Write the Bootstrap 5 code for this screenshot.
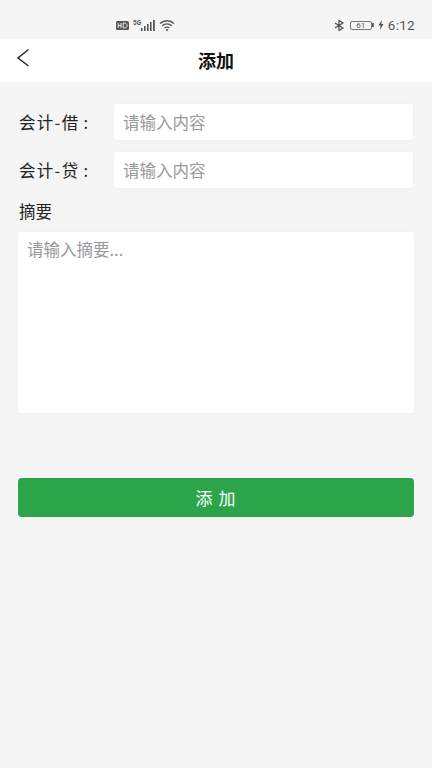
<!DOCTYPE html>
<html lang="zh">
<head>
<meta charset="utf-8">
<link href="https://cdn.jsdelivr.net/npm/bootstrap@5.3.0/dist/css/bootstrap.min.css" rel="stylesheet">
<style>
html,body{height:100%}
body{background:#f5f5f5;font-family:"Noto Sans CJK SC","Liberation Sans",sans-serif;color:#222;overflow:hidden}
.status-row{height:39px;padding:11px 17px 0 116px;color:#555}
.status-clock{font-family:Roboto,sans-serif;font-size:13.5px;letter-spacing:.3px}
.bt-mark{margin-right:6px}
.batt-box{width:22px;height:9px;border:1px solid #777;border-radius:2px;font:8px/8px Roboto,sans-serif;text-align:center;color:#555}
.batt-nub{width:2px;height:4px;background:#666}
.title-bar{height:43px;background:#fff}
.title-text{font-size:18px;font-weight:700;color:#111;line-height:43px}
.back-link{left:16px;top:9px;line-height:0}
.form-area{padding:22px 18px 0}
.field-line{height:36px;margin-bottom:12px}
.field-name{width:96px;flex:none;font-size:16.5px;letter-spacing:1.3px;color:#222;padding-left:1px;white-space:nowrap}
.colon-mark{margin-left:4px}
.soft-input{height:36px;border:0;border-radius:3px;font-size:16.5px;padding:0 9px;margin-right:1px;box-shadow:0 0 2px rgba(0,0,0,.05);color:#222}
.soft-input::placeholder{color:#999;opacity:1}
.memo-label{font-size:16.5px;line-height:22px;margin-bottom:10px;color:#222;padding-left:1px}
.memo-box{height:181px;border:0;border-radius:3px;font-size:16.5px;line-height:22px;padding:6px 9px;resize:none;box-shadow:0 0 2px rgba(0,0,0,.05)}
.memo-box::placeholder{color:#999;opacity:1}
.save-btn{height:39px;margin-top:65px;background:#2ca44a;border:0;border-radius:4px;color:#fff;font-size:17px;letter-spacing:1px;line-height:37px;padding:0}
</style>
</head>
<body>
<div class="status-row d-flex align-items-center justify-content-between">
  <div class="d-flex align-items-center">
    <svg class="me-1" width="13" height="9" viewBox="0 0 13 9" aria-hidden="true"><rect width="13" height="9" rx="1.500" fill="#555"/><path d="M2.200 2v5M2.200 4.500h2.800M5 2v5M7.200 2v5h1.300c1.600 0 2.500-1 2.500-2.500S10.100 2 8.500 2z" stroke="#fff" stroke-width=".9" fill="none"/></svg>
    <svg width="24" height="13" viewBox="0 0 24 13" aria-hidden="true" fill="#555"><text x="0" y="6" font-size="6.500" font-family="Roboto" font-weight="700">5G</text><rect x="8" y="9" width="1.600" height="3"/><rect x="11" y="7" width="1.600" height="5"/><rect x="14" y="5" width="1.600" height="7"/><rect x="17" y="3" width="1.600" height="9"/><rect x="20" y="1" width="1.800" height="11"/></svg>
    <svg width="19" height="13" viewBox="0 0 19 13" aria-hidden="true" fill="none" stroke="#555" stroke-width="1.300"><path d="M3 4.500C7 .8 13 .8 17 4.500M5.200 6.800C8 4.400 12 4.400 14.800 6.800M7.500 9C9 7.900 11 7.900 12.500 9"/><circle cx="10" cy="11" r="1.100" fill="#555" stroke="none"/></svg>
  </div>
  <div class="d-flex align-items-center">
    <svg class="bt-mark" width="10" height="11" viewBox="0 0 10 11" aria-hidden="true" fill="none" stroke="#444" stroke-width="1.100"><path d="M1 3l8 5-4 2.500V.5L9 3 1 8"/></svg>
    <div class="d-flex align-items-center">
      <div class="batt-box">61</div><span class="batt-nub d-block"></span>
    </div>
    <svg class="mx-1" width="6" height="10" viewBox="0 0 6 10" aria-hidden="true"><path d="M3.800 0L.5 5.600h2L2 10l3.500-6H3.400z" fill="#555"/></svg>
    <span class="status-clock">6:12</span>
  </div>
</div>
<header class="title-bar position-relative text-center">
  <a class="back-link position-absolute" href="#" aria-label="返回"><svg width="14" height="20" viewBox="0 0 14 20" fill="none" stroke="#222" stroke-width="1.400"><path d="M12.500 1.500L2 10l10.500 8"/></svg></a>
  <div class="title-text">添加</div>
</header>
<form class="form-area">
  <div class="field-line d-flex align-items-center">
    <label class="field-name" for="d1">会计-借<span class="colon-mark">:</span></label>
    <input id="d1" class="soft-input form-control" placeholder="请输入内容">
  </div>
  <div class="field-line d-flex align-items-center">
    <label class="field-name" for="d2">会计-贷<span class="colon-mark">:</span></label>
    <input id="d2" class="soft-input form-control" placeholder="请输入内容">
  </div>
  <div class="memo-label">摘要</div>
  <textarea class="memo-box form-control" placeholder="请输入摘要..."></textarea>
  <button type="button" class="save-btn btn w-100 d-block">添 加</button>
</form>
<script src="https://cdn.jsdelivr.net/npm/bootstrap@5.3.0/dist/js/bootstrap.bundle.min.js"></script>
</body>
</html>
